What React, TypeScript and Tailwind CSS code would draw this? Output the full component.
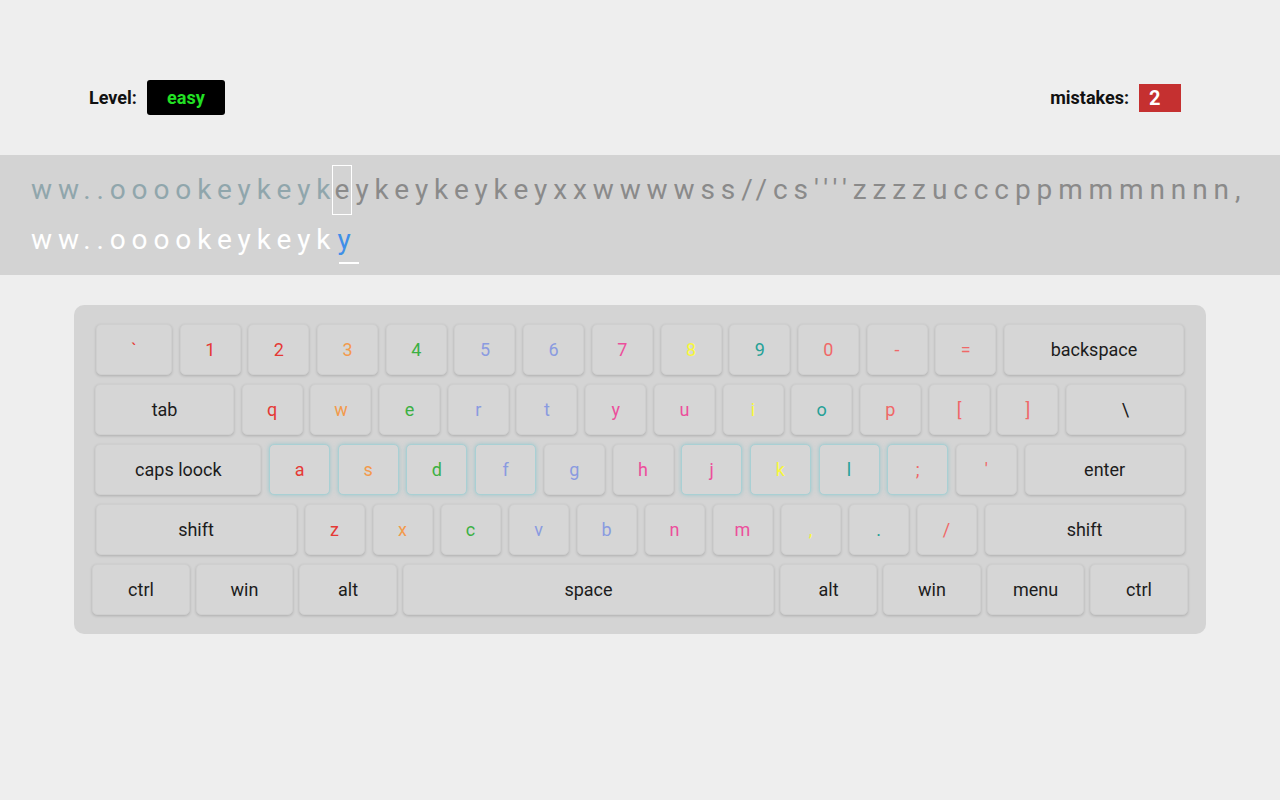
import React from "react";

type K = { l: string; w: number; c?: string; home?: boolean };

const RED = "text-[#e53935]";
const ORA = "text-[#f39a4c]";
const GRN = "text-[#3cb043]";
const BLU = "text-[#8a9be0]";
const PNK = "text-[#ec4f9c]";
const YEL = "text-[#f8f83a]";
const TEA = "text-[#26a197]";
const SAL = "text-[#f06868]";

const rows: { keys: K[]; gap: string }[] = [
  {
    gap: "gap-[7.7px]",
    keys: [
      { l: "`", w: 76, c: RED },
      { l: "1", w: 61, c: RED },
      { l: "2", w: 61, c: RED },
      { l: "3", w: 61, c: ORA },
      { l: "4", w: 61, c: GRN },
      { l: "5", w: 61, c: BLU },
      { l: "6", w: 61, c: BLU },
      { l: "7", w: 61, c: PNK },
      { l: "8", w: 61, c: YEL },
      { l: "9", w: 61, c: TEA },
      { l: "0", w: 61, c: SAL },
      { l: "-", w: 61, c: SAL },
      { l: "=", w: 61, c: SAL },
      { l: "backspace", w: 180 },
    ],
  },
  {
    gap: "gap-[7.7px]",
    keys: [
      { l: "tab", w: 139 },
      { l: "q", w: 61, c: RED },
      { l: "w", w: 61, c: ORA },
      { l: "e", w: 61, c: GRN },
      { l: "r", w: 61, c: BLU },
      { l: "t", w: 61, c: BLU },
      { l: "y", w: 61, c: PNK },
      { l: "u", w: 61, c: PNK },
      { l: "i", w: 61, c: YEL },
      { l: "o", w: 61, c: TEA },
      { l: "p", w: 61, c: SAL },
      { l: "[", w: 61, c: SAL },
      { l: "]", w: 61, c: SAL },
      { l: "\\", w: 119 },
    ],
  },
  {
    gap: "gap-[7.7px]",
    keys: [
      { l: "caps loock", w: 166 },
      { l: "a", w: 61, c: RED, home: true },
      { l: "s", w: 61, c: ORA, home: true },
      { l: "d", w: 61, c: GRN, home: true },
      { l: "f", w: 61, c: BLU, home: true },
      { l: "g", w: 61, c: BLU },
      { l: "h", w: 61, c: PNK },
      { l: "j", w: 61, c: PNK, home: true },
      { l: "k", w: 61, c: YEL, home: true },
      { l: "l", w: 61, c: TEA, home: true },
      { l: ";", w: 61, c: SAL, home: true },
      { l: "'", w: 61, c: SAL },
      { l: "enter", w: 160 },
    ],
  },
  {
    gap: "gap-[8px]",
    keys: [
      { l: "shift", w: 201 },
      { l: "z", w: 60, c: RED },
      { l: "x", w: 60, c: ORA },
      { l: "c", w: 60, c: GRN },
      { l: "v", w: 60, c: BLU },
      { l: "b", w: 60, c: BLU },
      { l: "n", w: 60, c: PNK },
      { l: "m", w: 60, c: PNK },
      { l: ",", w: 60, c: YEL },
      { l: ".", w: 60, c: TEA },
      { l: "/", w: 60, c: SAL },
      { l: "shift", w: 200 },
    ],
  },
  {
    gap: "gap-[6px]",
    keys: [
      { l: "ctrl", w: 98 },
      { l: "win", w: 97 },
      { l: "alt", w: 98 },
      { l: "space", w: 371 },
      { l: "alt", w: 97 },
      { l: "win", w: 98 },
      { l: "menu", w: 97 },
      { l: "ctrl", w: 98 },
    ],
  },
];

function Key({ k }: { k: K }) {
  const base =
    "h-[51px] shrink-0 flex items-center justify-center rounded-[5px] bg-[#d6d6d6] text-[18px] leading-none";
  const look = k.home
    ? "border border-[#a9d0d4] shadow-[0_0_4px_rgba(110,185,195,0.55)]"
    : "border border-[#cfcfcf] shadow-[0_1px_3px_rgba(0,0,0,0.18)]";
  return (
    <div className={`${base} ${look} ${k.c ?? "text-[#1c1c1c]"}`} style={{ width: k.w }}>
      {k.l}
    </div>
  );
}

export default function App() {
  const font = { fontFamily: "Roboto, 'Liberation Sans', sans-serif" };
  return (
    <div className="w-[1280px] h-[800px] bg-[#eeeeee] overflow-hidden" style={font}>
      {/* header */}
      <div className="h-[155px] pt-[80px] flex items-start justify-between pl-[89px] pr-[99px]">
        <div className="h-[35px] flex items-center gap-[10px]">
          <span className="text-[18px] font-bold text-[#111]">Level:</span>
          <span className="w-[78px] h-[35px] bg-black rounded-[3px] flex items-center justify-center text-[18px] font-bold text-[#22e024]">
            easy
          </span>
        </div>
        <div className="h-[35px] flex items-center gap-[10px]">
          <span className="text-[18px] font-bold text-[#111]">mistakes:</span>
          <span className="w-[42px] h-[28px] bg-[#c53030] flex items-center pl-[10px] text-[20px] font-bold text-white">
            2
          </span>
        </div>
      </div>

      {/* text band */}
      <div className="h-[120px] bg-[#d3d3d3] pt-[10px] pl-[31px] text-[28px] tracking-[5.9px] whitespace-nowrap overflow-hidden">
        <div className="h-[50px] leading-[50px] flex">
          <span className="text-[#90a6ac]">ww..ooookeykey</span>
          <span className="text-[#90a6ac] tracking-normal">k</span>
          <span className="text-[#8a8a8a] border border-white h-[50px] leading-[48px] px-[2px] tracking-normal ml-[1px]">e</span>
          <span className="text-[#8a8a8a] ml-[3px]">ykeykeykeyxxwwwwss//cs''''zzzzucccppmmmnnnn,</span>
        </div>
        <div className="h-[50px] leading-[50px] flex">
          <span className="text-white">ww..ooookeykey</span>
          <span className="text-white tracking-normal">k</span>
          <span className="text-[#3f8fe8] relative ml-[7px] tracking-normal">
            y
            <span className="absolute left-[1px] top-[47px] w-[20px] h-[2px] bg-white" />
          </span>
        </div>
      </div>

      {/* keyboard */}
      <div className="mt-[30px] mx-[74px] h-[329px] bg-[#d4d4d4] rounded-[10px] py-[19px] flex flex-col gap-[9px]">
        {rows.map((r, i) => (
          <div key={i} className={`flex justify-center ${r.gap}`}>
            {r.keys.map((k, j) => (
              <Key key={j} k={k} />
            ))}
          </div>
        ))}
      </div>
    </div>
  );
}
